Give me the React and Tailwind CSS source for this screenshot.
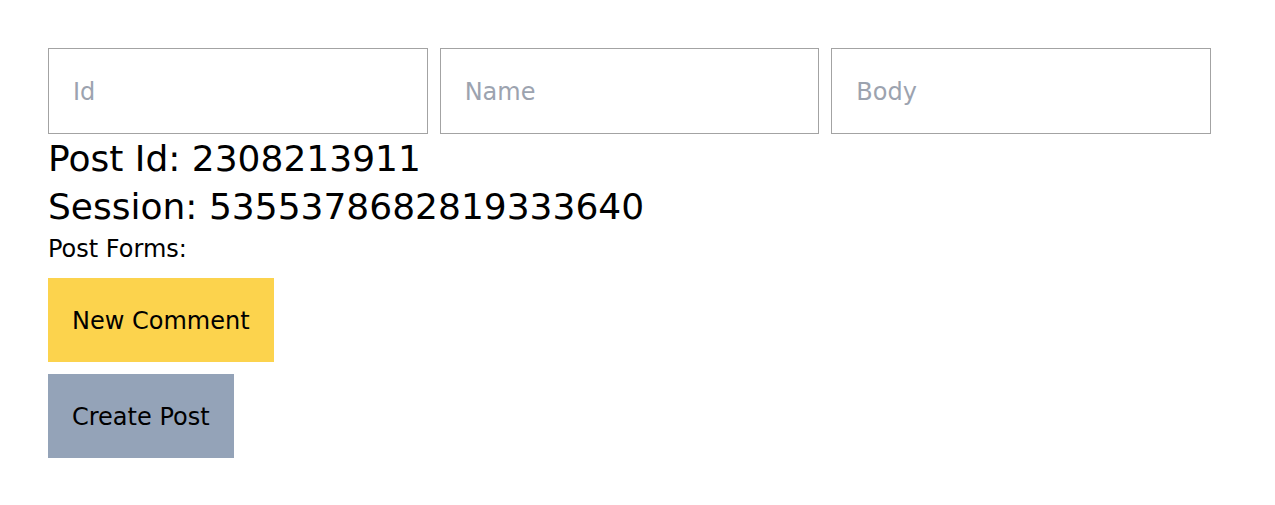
import React from 'react';

const App = () => {
  return (
    <div className="min-h-screen bg-white px-12 pt-12 font-['DejaVu_Sans',sans-serif] text-black">
      {/* Inputs */}
      <div className="grid w-[1163px] grid-cols-3 gap-3">
        {['Id', 'Name', 'Body'].map((p) => (
          <input
            key={p}
            type="text"
            placeholder={p}
            className="h-[86px] w-full border border-[#a3a3a3] bg-white px-6 pt-[25px] pb-[23px] text-2xl leading-9 placeholder:text-[#9ca3af] focus:outline-none"
          />
        ))}
      </div>

      {/* Info */}
      <div className="mt-px text-[36px] leading-[48px]">Post Id: 2308213911</div>
      <div className="text-[36px] leading-[48px]">Session: 5355378682819333640</div>
      <div className="text-2xl leading-9">Post Forms:</div>

      {/* Buttons */}
      <div className="mt-[11px] flex flex-col items-start gap-3">
        <button className="bg-[#fcd34d] px-6 pt-[25px] pb-[23px] text-2xl leading-9 text-black">New Comment</button>
        <button className="bg-[#94a3b8] px-6 pt-[25px] pb-[23px] text-2xl leading-9 text-black">Create Post</button>
      </div>
    </div>
  );
};

export default App;
